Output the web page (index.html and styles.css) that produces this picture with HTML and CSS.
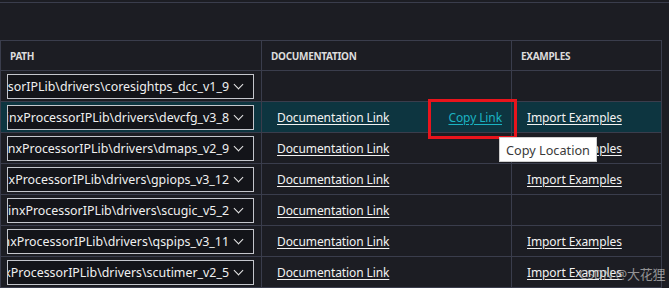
FILE: index.html
```html
<!DOCTYPE html>
<html lang="en">
<head>
  <meta charset="UTF-8">
  <title>Drivers</title>
  <link rel="stylesheet" href="styles.css">
</head>
<body>
  <div class="topbar"></div>

  <table class="drivers">
    <thead>
      <tr>
        <th class="col-path">Path</th>
        <th class="col-doc">Documentation</th>
        <th class="col-ex">Examples</th>
      </tr>
    </thead>
    <tbody>
      <tr>
        <td><div class="select"><span class="value">XilinxProcessorIPLib\drivers\coresightps_dcc_v1_9</span><span class="chev"></span></div></td>
        <td></td>
        <td></td>
      </tr>
      <tr class="active">
        <td><div class="select"><span class="value">XilinxProcessorIPLib\drivers\devcfg_v3_8</span><span class="chev"></span></div></td>
        <td>
          <div class="doc">
            <a href="#">Documentation Link</a>
            <a href="#" class="copy">Copy Link</a>
            <span class="mark"></span>
          </div>
        </td>
        <td><a href="#">Import Examples</a></td>
      </tr>
      <tr>
        <td><div class="select"><span class="value">XilinxProcessorIPLib\drivers\dmaps_v2_9</span><span class="chev"></span></div></td>
        <td><a href="#">Documentation Link</a></td>
        <td><a href="#">Import Examples</a></td>
      </tr>
      <tr>
        <td><div class="select"><span class="value">XilinxProcessorIPLib\drivers\gpiops_v3_12</span><span class="chev"></span></div></td>
        <td><a href="#">Documentation Link</a></td>
        <td><a href="#">Import Examples</a></td>
      </tr>
      <tr>
        <td><div class="select"><span class="value">XilinxProcessorIPLib\drivers\scugic_v5_2</span><span class="chev"></span></div></td>
        <td><a href="#">Documentation Link</a></td>
        <td></td>
      </tr>
      <tr>
        <td><div class="select"><span class="value">XilinxProcessorIPLib\drivers\qspips_v3_11</span><span class="chev"></span></div></td>
        <td><a href="#">Documentation Link</a></td>
        <td><a href="#">Import Examples</a></td>
      </tr>
      <tr>
        <td><div class="select"><span class="value">XilinxProcessorIPLib\drivers\scutimer_v2_5</span><span class="chev"></span></div></td>
        <td><a href="#">Documentation Link</a></td>
        <td><a href="#">Import Examples</a></td>
      </tr>
    </tbody>
  </table>

  <div class="tooltip">Copy Location</div>
  <div class="watermark">CSDN @大花狸</div>
</body>
</html>
```

FILE: styles.css
```css
body {
  margin: 0;
  background: #1c1d23;
  color: #e6e6e6;
  font-family: "Noto Sans", "Noto Sans CJK SC", sans-serif;
  font-size: 12px;
  letter-spacing: -0.1px;
  height: 288px;
  overflow: hidden;
  position: relative;
}
.topbar {
  margin-top: 2px;
  height: 38px;
  border-top: 1px solid #3a3d4c;
  box-sizing: border-box;
}
.drivers {
  border-collapse: collapse;
  width: 662px;
  table-layout: fixed;
}
.drivers th,
.drivers td {
  border: 1px solid #3a3d4c;
  text-align: left;
  padding: 0;
}
.drivers th {
  height: 29px;
  padding-left: 9px;
  font-size: 10px;
  font-weight: 700;
  text-transform: uppercase;
  color: #dcdcdc;
  letter-spacing: -0.3px;
}
.drivers td {
  height: 30px;
  padding-left: 15px;
}
.drivers td:first-child {
  padding-left: 6px;
}
.col-path { width: 251px; }
.col-doc { width: 240px; }
.drivers tr.active td {
  background: #0d3540;
}
.drivers a {
  color: #f2f2f2;
  text-decoration: underline;
  text-underline-offset: 2px;
}
.select {
  width: 247px;
  height: 25px;
  box-sizing: border-box;
  border: 1px solid #c4c6cc;
  background: #131419;
  display: flex;
  align-items: center;
  justify-content: flex-end;
  overflow: hidden;
  padding-right: 9px;
  white-space: nowrap;
  font-size: 12.4px;
  letter-spacing: 0;
}
.select .value {
  color: #f0f0f0;
  flex-shrink: 0;
}
.chev {
  flex-shrink: 0;
  width: 6px;
  height: 6px;
  border-right: 1.3px solid #e8e8e8;
  border-bottom: 1.3px solid #e8e8e8;
  transform: rotate(45deg);
  margin: -4px 2px 0 6px;
}
.doc {
  display: flex;
  align-items: center;
  padding-right: 9px;
  position: relative;
}
.doc .copy {
  margin-left: auto;
  color: #1bb3c2;
}
.mark {
  position: absolute;
  left: 151px;
  top: -10px;
  width: 89px;
  height: 40px;
  box-sizing: border-box;
  border: 3px solid #e8141c;
}
.tooltip {
  position: absolute;
  left: 499px;
  top: 137px;
  width: 98px;
  height: 25px;
  box-sizing: border-box;
  background: #ffffff;
  border: 1px solid #cfcfcf;
  color: #3a3a3a;
  font-size: 12.7px;
  letter-spacing: 0;
  display: flex;
  align-items: center;
  justify-content: center;
}
.watermark {
  position: absolute;
  left: 579px;
  top: 264px;
  color: rgba(200, 200, 200, 0.7);
  font-size: 13px;
  letter-spacing: -0.3px;
  white-space: nowrap;
}
```
